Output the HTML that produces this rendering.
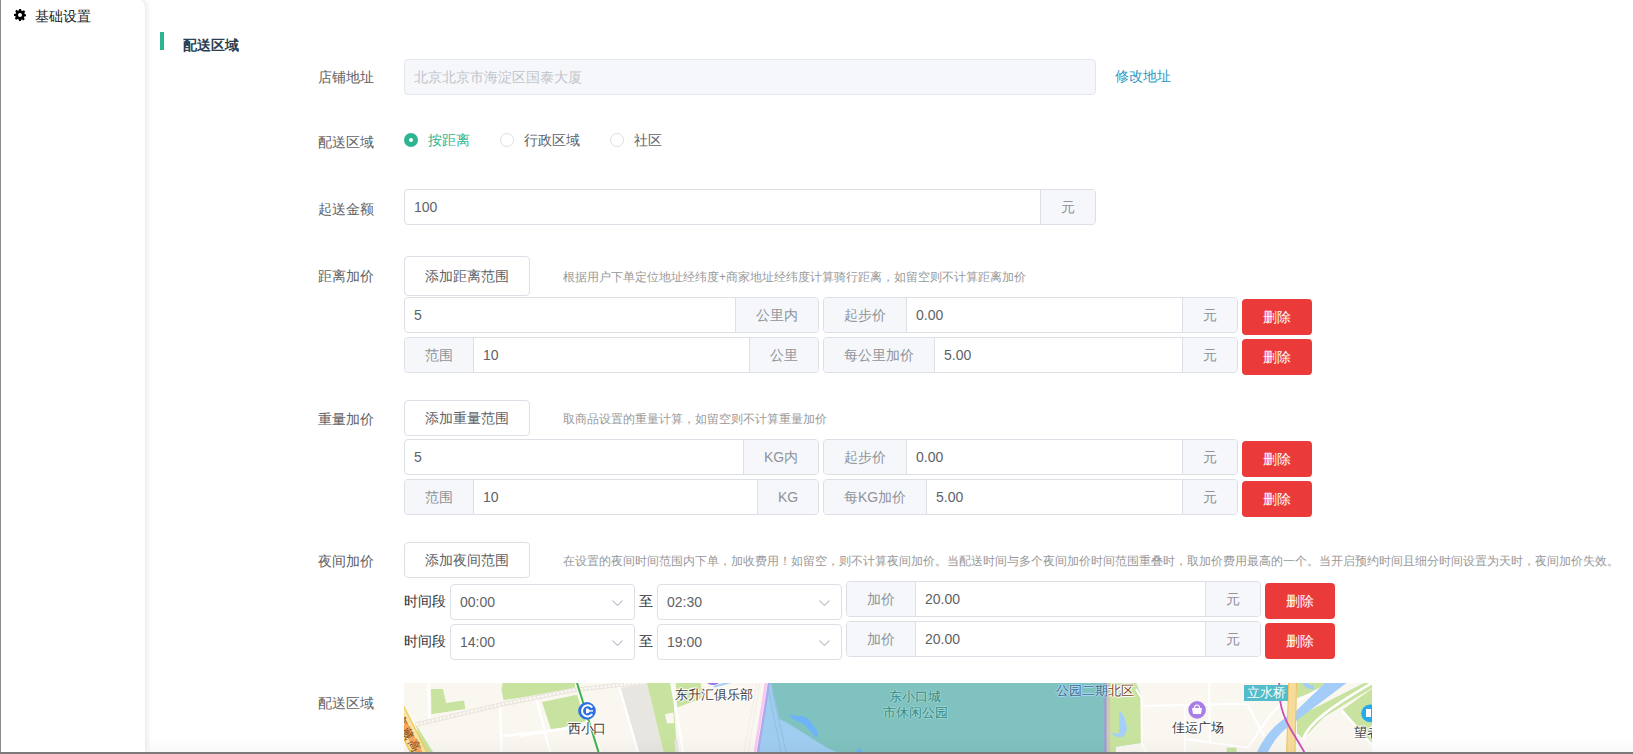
<!DOCTYPE html>
<html><head><meta charset="utf-8">
<style>
*{box-sizing:border-box;margin:0;padding:0}
html,body{width:1633px;height:754px;overflow:hidden;background:#fff;font-family:"Liberation Sans",sans-serif;font-size:14px;color:#606266}
.abs{position:absolute}
#lb{left:0;top:0;width:1px;height:754px;background:#8a8a8a}
#bb{left:0;top:752px;width:1633px;height:2px;background:#7a7a7a}
#side{left:1px;top:-3px;width:144px;height:755px;background:#fff;border-top-right-radius:12px;box-shadow:1px 0 6px rgba(0,0,0,.12)}
.t{position:absolute;white-space:nowrap;line-height:1}
.lbl{position:absolute;left:318px;width:56px;white-space:nowrap;color:#606266;font-size:14px;line-height:20px}
.inp{position:absolute;border:1px solid #dcdfe6;border-radius:4px;background:#fff;height:36px;overflow:hidden}
.inp .v{position:absolute;left:9px;top:0;line-height:34px;color:#606266}
.pre,.app{position:absolute;top:0;bottom:0;background:#f5f7fa;color:#909399;text-align:center;line-height:34px}
.pre{left:0;border-right:1px solid #dcdfe6}
.app{right:0;border-left:1px solid #dcdfe6}
.btn{position:absolute;border:1px solid #dcdfe6;border-radius:4px;background:#fff;color:#606266;text-align:center}
.del{position:absolute;width:70px;height:36px;background:#ea3a3a;border-radius:4px;color:#fff;text-align:center;line-height:36px;font-size:14px}
.hint{position:absolute;left:563px;font-size:12px;color:#999;white-space:nowrap;line-height:14px}
.sel{position:absolute;border:1px solid #dcdfe6;border-radius:4px;background:#fff;height:36px;width:185px}
.sel .v{position:absolute;left:9px;top:0;line-height:34px;color:#606266}
.sel svg{position:absolute;right:11px;top:15px}
.mt{position:absolute;white-space:nowrap;line-height:1;color:#3a3a3a;text-shadow:1px 0 0 #fff,-1px 0 0 #fff,0 1px 0 #fff,0 -1px 0 #fff,1px 1px 1px #fff,-1px -1px 1px #fff}
.tl{color:#3a8a85;text-shadow:1px 0 0 #9ed6d2,-1px 0 0 #9ed6d2,0 1px 0 #9ed6d2,0 -1px 0 #9ed6d2}
</style></head><body>
<div id="side" class="abs"></div>
<div id="lb" class="abs"></div>

<!-- sidebar item -->
<svg class="abs" style="left:14px;top:9px" width="12" height="12" viewBox="0 0 12 12"><path fill="#000" d="M5 0h2l.3 1.6 1.1.5L9.8 1.2l1.4 1.4-.9 1.4.5 1.1L12 5.4v1.9l-1.6.3-.5 1.1.9 1.4-1.4 1.4-1.4-.9-1.1.5L7 12H5l-.3-1.6-1.1-.5-1.4.9-1.4-1.4.9-1.4-.5-1.1L0 7V5l1.6-.3.5-1.1-.9-1.4 1.4-1.4 1.4.9 1.1-.5z M6 4a2 2 0 1 0 0 4a2 2 0 1 0 0-4z" fill-rule="evenodd"/></svg>
<div class="t" style="left:35px;top:9px;color:#222;font-size:14px">基础设置</div>

<!-- section title -->
<div class="abs" style="left:160px;top:32px;width:4px;height:18px;background:#2db592"></div>
<div class="t" style="left:183px;top:38px;font-size:14px;font-weight:bold;color:#2c3e50">配送区域</div>

<!-- 店铺地址 -->
<div class="lbl" style="top:67px">店铺地址</div>
<div class="inp" style="left:404px;top:59px;width:692px;background:#f5f7fa;border-color:#e4e7ed"><span class="v" style="color:#c0c4cc">北京北京市海淀区国泰大厦</span></div>
<div class="t" style="left:1115px;top:69px;color:#2e97c4">修改地址</div>

<!-- 配送区域 radios -->
<div class="lbl" style="top:132px">配送区域</div>
<div class="abs" style="left:404px;top:133px;width:14px;height:14px;border-radius:50%;background:#2db592"></div>
<div class="abs" style="left:409px;top:138px;width:4px;height:4px;border-radius:50%;background:#fff"></div>
<div class="t" style="left:428px;top:133px;color:#2db592">按距离</div>
<div class="abs" style="left:500px;top:133px;width:14px;height:14px;border-radius:50%;border:1px solid #dcdfe6"></div>
<div class="t" style="left:524px;top:133px;color:#606266">行政区域</div>
<div class="abs" style="left:610px;top:133px;width:14px;height:14px;border-radius:50%;border:1px solid #dcdfe6"></div>
<div class="t" style="left:634px;top:133px;color:#606266">社区</div>

<!-- 起送金额 -->
<div class="lbl" style="top:199px">起送金额</div>
<div class="inp" style="left:404px;top:189px;width:692px"><span class="v">100</span><div class="app" style="width:55px">元</div></div>

<!-- 距离加价 -->
<div class="lbl" style="top:266px">距离加价</div>
<div class="btn" style="left:404px;top:256px;width:126px;height:40px;line-height:38px">添加距离范围</div>
<div class="hint" style="top:270px">根据用户下单定位地址经纬度+商家地址经纬度计算骑行距离，如留空则不计算距离加价</div>

<div class="inp" style="left:404px;top:297px;width:415px"><span class="v">5</span><div class="app" style="width:83px">公里内</div></div>
<div class="inp" style="left:823px;top:297px;width:415px"><div class="pre" style="width:83px">起步价</div><span class="v" style="left:92px">0.00</span><div class="app" style="width:55px">元</div></div>
<div class="del" style="left:1242px;top:299px">删除</div>

<div class="inp" style="left:404px;top:337px;width:415px"><div class="pre" style="width:69px">范围</div><span class="v" style="left:78px">10</span><div class="app" style="width:69px">公里</div></div>
<div class="inp" style="left:823px;top:337px;width:415px"><div class="pre" style="width:111px">每公里加价</div><span class="v" style="left:120px">5.00</span><div class="app" style="width:55px">元</div></div>
<div class="del" style="left:1242px;top:339px">删除</div>

<!-- 重量加价 -->
<div class="lbl" style="top:409px">重量加价</div>
<div class="btn" style="left:404px;top:400px;width:126px;height:36px;line-height:34px">添加重量范围</div>
<div class="hint" style="top:412px">取商品设置的重量计算，如留空则不计算重量加价</div>

<div class="inp" style="left:404px;top:439px;width:415px"><span class="v">5</span><div class="app" style="width:75px">KG内</div></div>
<div class="inp" style="left:823px;top:439px;width:415px"><div class="pre" style="width:83px">起步价</div><span class="v" style="left:92px">0.00</span><div class="app" style="width:55px">元</div></div>
<div class="del" style="left:1242px;top:441px">删除</div>

<div class="inp" style="left:404px;top:479px;width:415px"><div class="pre" style="width:69px">范围</div><span class="v" style="left:78px">10</span><div class="app" style="width:61px">KG</div></div>
<div class="inp" style="left:823px;top:479px;width:415px"><div class="pre" style="width:103px">每KG加价</div><span class="v" style="left:112px">5.00</span><div class="app" style="width:55px">元</div></div>
<div class="del" style="left:1242px;top:481px">删除</div>

<!-- 夜间加价 -->
<div class="lbl" style="top:551px">夜间加价</div>
<div class="btn" style="left:404px;top:542px;width:126px;height:36px;line-height:34px">添加夜间范围</div>
<div class="hint" style="top:554px">在设置的夜间时间范围内下单，加收费用！如留空，则不计算夜间加价。当配送时间与多个夜间加价时间范围重叠时，取加价费用最高的一个。当开启预约时间且细分时间设置为天时，夜间加价失效。</div>

<div class="t" style="left:404px;top:594px;color:#333">时间段</div>
<div class="sel" style="left:450px;top:584px"><span class="v">00:00</span><svg width="11" height="7" viewBox="0 0 11 7"><path d="M.5.5l5 5 5-5" fill="none" stroke="#c0c4cc" stroke-width="1.1"/></svg></div>
<div class="t" style="left:639px;top:594px;color:#333">至</div>
<div class="sel" style="left:657px;top:584px"><span class="v">02:30</span><svg width="11" height="7" viewBox="0 0 11 7"><path d="M.5.5l5 5 5-5" fill="none" stroke="#c0c4cc" stroke-width="1.1"/></svg></div>
<div class="inp" style="left:846px;top:581px;width:415px"><div class="pre" style="width:69px">加价</div><span class="v" style="left:78px">20.00</span><div class="app" style="width:55px">元</div></div>
<div class="del" style="left:1265px;top:583px">删除</div>

<div class="t" style="left:404px;top:634px;color:#333">时间段</div>
<div class="sel" style="left:450px;top:624px"><span class="v">14:00</span><svg width="11" height="7" viewBox="0 0 11 7"><path d="M.5.5l5 5 5-5" fill="none" stroke="#c0c4cc" stroke-width="1.1"/></svg></div>
<div class="t" style="left:639px;top:634px;color:#333">至</div>
<div class="sel" style="left:657px;top:624px"><span class="v">19:00</span><svg width="11" height="7" viewBox="0 0 11 7"><path d="M.5.5l5 5 5-5" fill="none" stroke="#c0c4cc" stroke-width="1.1"/></svg></div>
<div class="inp" style="left:846px;top:621px;width:415px"><div class="pre" style="width:69px">加价</div><span class="v" style="left:78px">20.00</span><div class="app" style="width:55px">元</div></div>
<div class="del" style="left:1265px;top:623px">删除</div>

<!-- 配送区域 map -->
<div class="lbl" style="top:693px">配送区域</div>
<div id="map" class="abs" style="left:404px;top:683px;width:968px;height:69px;background:#f9f7f1;overflow:hidden">
<svg width="968" height="69" viewBox="0 0 968 69" style="position:absolute;left:0;top:0">
<rect width="968" height="69" fill="#faf7f1"/>
<!-- expressway left -->
<polygon points="11,40 29,69 20,69" fill="#c8e3a0"/>
<polyline points="-7.1,26 16.1,72.1" stroke="#f2c94c" stroke-width="16" fill="none"/>
<polyline points="-7.1,26 16.1,72.1" stroke="#f7e2a2" stroke-width="13.5" fill="none"/>
<polyline points="-7.1,26 16.1,72.1" stroke="#f9a45c" stroke-width="6.5" fill="none"/>
<text x="0" y="0" transform="translate(-9,34) rotate(63.3)" font-size="12" fill="#7a4a1c" style="letter-spacing:2px">京藏高速</text>
<!-- green patches -->
<polygon points="27,6 39,6 42,20 60,17.6 61.3,26 27.4,31.3" fill="#c8e3a0"/>
<polygon points="98.6,0 171,0 171,4.9 116,14.7 99.5,17.1 97.6,6.8" fill="#c8e3a0"/>
<polygon points="138,19 173,11.7 181.7,38.2 147.4,47.5" fill="#c8e3a0"/>
<!-- gray block -->
<polygon points="216,5 243,0 259.5,69 234.5,69" fill="#e8e6e1"/>
<polygon points="243,0 268.4,0 273,69 259.5,69" fill="#c8e3a0"/>
<polygon points="261,31.3 269.4,29.4 270.3,40.2 263,40.2" fill="#faf7f1"/>
<polygon points="270.3,57 273.5,56 275,69 271.5,69" fill="#e8e6e1"/>
<polygon points="271.8,0 296.8,0 298.8,14.7 273.3,24.5" fill="#c8e3a0"/>
<!-- roads -->
<g stroke="#ffffff" stroke-width="2.4" fill="none">
<polyline points="24.5,0 25.5,37"/>
<polyline points="96,19 97.4,69"/>
<polyline points="97.4,53.3 158.4,46"/>
<polyline points="132.7,16.5 146,69"/>
<polyline points="116,53 165,45"/>
<polyline points="172,1 196.5,69"/>
<polyline points="214,0 234,69"/>
<polyline points="267.4,0 279.2,69"/>
<polyline points="353,0 340,69" stroke="#f0ede6" stroke-width="1"/>
<polyline points="356,0 344,69" stroke="#f0ede6" stroke-width="1"/>
</g>
<polyline points="12.2,41.5 96,21.7 169.4,7 236,-0.4" stroke="#ebe6de" stroke-width="4.5" fill="none"/>
<polyline points="12.2,41.5 96,21.7 169.4,7 236,-0.4" stroke="#fbfaf7" stroke-width="2.2" stroke-dasharray="2.5 1.5" fill="none"/>
<!-- metro green line -->
<polyline points="173,0 194.5,69" stroke="#3cb44b" stroke-width="2" fill="none"/>
<!-- metro icon -->
<circle cx="183" cy="27.9" r="8.8" fill="#2f6fe4"/>
<path d="M188.2,24.6 A5.6,5.6 0 1 0 188.2,31.2" fill="none" stroke="#fff" stroke-width="2"/>
<path d="M182,25.6 h1.2 a2.3,2.3 0 0 1 0,4.6 h-1.2z" fill="#fff"/>
<rect x="183" y="27.2" width="6" height="1.4" fill="#fff"/>
<!-- purple semicircle top -->
<ellipse cx="309" cy="-1" rx="6" ry="3" fill="#9b6fe8"/>
<polygon points="310.6,4.4 327.3,0 320,0 309,3" fill="#a3cdf8"/>
<!-- pink/purple borders & water -->
<polygon points="365.3,0 968,0 968,69 354,69" fill="#80c2c0"/>
<polygon points="365.3,0 367,0 375.6,36.3 382.5,39.2 424.7,65.7 432.5,69 354,69" fill="#9fcdf0"/>
<polyline points="362,0 351,69" stroke="#f8c8f0" stroke-width="2.6" fill="none"/>
<polyline points="365,0 354,69" stroke="#b0a8ee" stroke-width="2.4" fill="none"/>
<polyline points="364,5 377,69" stroke="#8db8d8" stroke-width="0.7" fill="none"/>
<polyline points="368,7 382,69" stroke="#8db8d8" stroke-width="0.7" fill="none"/>
<path d="M384.5,32.3 C388,31 392,34 397,33 C402,33 406,37 409,42 C412,45 414,48 413.9,54 L411,54 C407,48 403,44 398,40 C393,38 389,37 384.5,32.3Z" fill="#6cb3f8"/>
<path d="M452,69 L455,65.5 L458,66 L458,69Z" fill="#6cb3f8"/>
<!-- teal text -->
<!-- east stripes -->
<rect x="699.8" y="0" width="3" height="69" fill="#9aa3d0"/>
<rect x="702.7" y="0" width="3" height="69" fill="#d9c3b3"/>
<polygon points="705.7,0 732,0 737,14.7 738,59.8 711.6,63.7 711.6,69 705.7,69" fill="#c8e3a0"/>
<polygon points="737,0 968,0 968,69 705.7,69 711.6,69 711.6,63.7 738,59.8 738,15 732,0" fill="#faf7f1"/>
<path d="M716,28.4 C719,29 722,37 723,45 C723,51 719,55 715,54.5 C712,54 708,51 705.7,50 C708,49 713,52 715,50 C716,45 714,34 716,28.4Z" fill="#a6cff8"/>
<g stroke="#ffffff" stroke-width="2.2" fill="none">
<polyline points="732,6 737.5,14.7 738,59.8 742,69"/>
<polyline points="738,23 843,20.6"/>
<polyline points="805,0 806,59.8"/>
<polyline points="781,21 781,69"/>
<polyline points="843,20.6 860,53"/>
<polyline points="780.5,55.9 844.3,64.7"/>
<polyline points="844,64.7 866,32 880,18"/>
</g>
<rect x="822.7" y="64.7" width="9.8" height="5" fill="#c8e3a0"/>
<!-- right area -->
<polygon points="893,0 968,0 968,69 893,69" fill="#faf7f1"/>
<polygon points="893,0 921,0 921,5 893,15" fill="#c8e3a0"/>
<polygon points="893,34 960,0 968,0 968,5 920,34 899,56 893,50" fill="#c8e3a0"/>
<polygon points="937.6,27.4 968,5.8 968,60.8" fill="#c8e3a0"/>
<g stroke="#ffffff" stroke-width="2.6" fill="none">
<polyline points="893,18 928,0"/>
<path d="M899,56 C905,40 925,25 968,0"/>
<polyline points="937.6,27 968,62"/>
</g>
<path d="M864,69 C870,57 878,47 892,38 L942.5,0 L921,0 L892,28 C874,38 862,50 853,69Z" fill="#a3cdf8"/>
<path d="M900,0 C903,3 907,5 910,4" stroke="#a3cdf8" stroke-width="4" fill="none"/>
<polygon points="884.6,0 892.5,0 891,69 882.7,69" fill="#f5dc9a"/>
<polyline points="884.6,0 882.7,69" stroke="#eec060" stroke-width="1" fill="none"/>
<polyline points="892.5,0 891,69" stroke="#eec060" stroke-width="1" fill="none"/>
<path d="M875.2,0 L876.3,18.6 C878,30 882,38 886,45 L900.3,69" stroke="#c94fb4" stroke-width="1.8" fill="none"/>
<!-- icons -->
<circle cx="793.1" cy="26.9" r="8.8" fill="#a77ee8"/>
<path d="M788,25 h10 l-1,6 h-8z" fill="#fff"/>
<path d="M790.5,25 a2.5,3 0 0 1 5,0" stroke="#fff" stroke-width="1.2" fill="none"/>
<circle cx="966" cy="30.4" r="8.8" fill="#29a9ec"/>
<rect x="962" y="26" width="5" height="8" fill="#fff"/>
</svg>

<div class="mt" style="left:164px;top:39px;font-size:13px;letter-spacing:-.3px">西小口</div>
<div class="mt" style="left:271px;top:5px;font-size:13px">东升汇俱乐部</div>
<div class="mt tl" style="left:485px;top:7px;font-size:13px">东小口城</div>
<div class="mt tl" style="left:479px;top:23px;font-size:13px">市休闲公园</div>
<div class="mt" style="left:652px;top:1px;font-size:13px"><span style="color:#4f6b80;text-shadow:1px 0 0 #a8dcf8,-1px 0 0 #a8dcf8,0 1px 0 #a8dcf8,0 -1px 0 #a8dcf8">公园二期</span><span style="color:#7a4520">北区</span></div>
<div class="mt" style="left:768px;top:38px;font-size:13px">佳运广场</div>
<div class="abs" style="left:840px;top:2px;width:44px;height:16px;background:#52bccb;color:#fff;font-size:13px;line-height:16px;text-align:center">立水桥</div>
<div class="mt" style="left:950px;top:43px;font-size:13px">望者</div>
</div>

<div class="abs" style="left:145px;top:736px;width:1488px;height:16px;background:linear-gradient(to bottom,rgba(0,0,0,0),rgba(0,0,0,.025))"></div>
<div id="bb" class="abs"></div>
</body></html>
